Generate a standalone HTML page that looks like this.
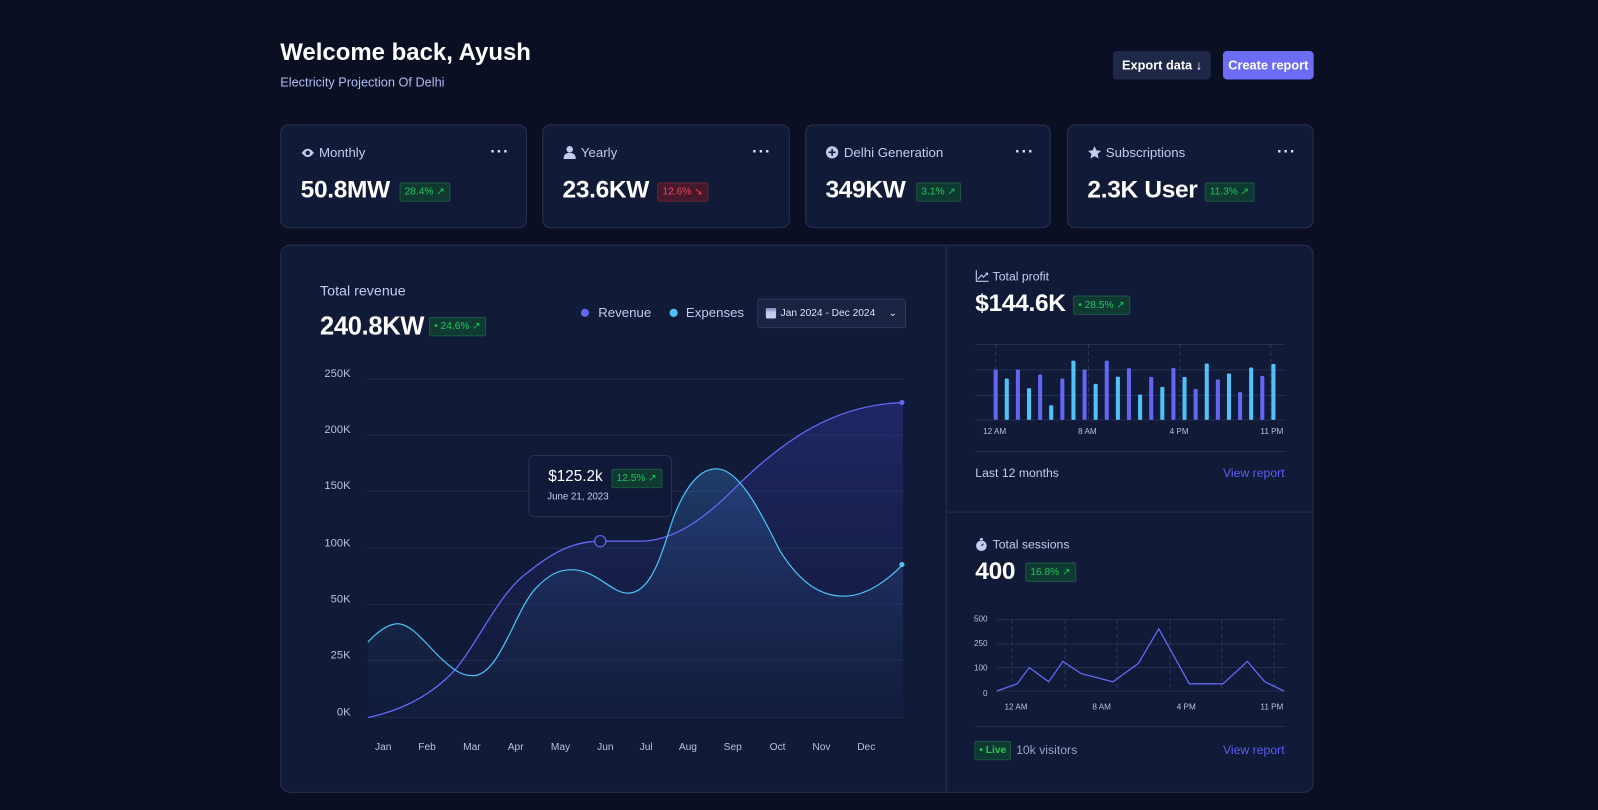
<!DOCTYPE html>
<html><head><meta charset="utf-8"><style>
*{margin:0;padding:0;box-sizing:border-box}
html,body{width:1598px;height:810px;overflow:hidden;background:#0a0f24;font-family:"Liberation Sans",sans-serif;color:#fff}
#w{position:absolute;left:0;top:0;width:1568px;height:795px;transform:scale(1.01913);transform-origin:0 0}
.a{position:absolute;white-space:nowrap}
.card{position:absolute;background:#111a37;border:1px solid #283152;border-radius:8px}
.lbl{color:#c5cbf0;font-size:13px}
.val{font-weight:bold;font-size:24px;letter-spacing:-0.3px}
.bg{position:absolute;font-size:10px;color:#22c55e;background:#0f3a31;border:1px solid #1c5545;border-radius:2px;padding:2px 4px;line-height:13px}
.red{color:#f0485a;background:#48192a;border-color:#6a2535}
.dots{color:#dfe3f8;font-size:16px;letter-spacing:1px;font-weight:bold}
.ax{fill:#b9c0e0;font-size:11px;font-family:"Liberation Sans",sans-serif}
.axs{fill:#b9c0e0;font-size:8px;font-family:"Liberation Sans",sans-serif}
</style></head><body><div id="w">
<div class="a" style="left:275px;top:38px;font-size:23.5px;font-weight:bold">Welcome back, Ayush</div>
<div class="a" style="left:275px;top:74px;font-size:12.5px;color:#b4bdf0">Electricity Projection Of Delhi</div>
<div class="a" style="left:1092px;top:50px;width:96px;height:28px;background:#1f2846;border-radius:4px;font-size:12.5px;font-weight:bold;line-height:28px;padding-left:9px">Export data <span style="font-weight:normal">↓</span></div>
<div class="a" style="left:1200px;top:50px;width:89px;height:28px;background:#6c6cf5;border-radius:4px;font-size:12.5px;font-weight:bold;line-height:28px;text-align:center">Create report</div>

<div class="card" style="left:275px;top:122px;width:242px;height:102px"></div>
<div class="card" style="left:532px;top:122px;width:243px;height:102px"></div>
<div class="card" style="left:790px;top:122px;width:241px;height:102px"></div>
<div class="card" style="left:1047px;top:122px;width:242px;height:102px"></div>

<svg class="a" style="left:295px;top:144px" width="14" height="12" viewBox="0 0 14 12"><path d="M1 6Q7-2 13 6Q7 14 1 6Z" fill="#c5cbf0"/><circle cx="7" cy="6" r="2.2" fill="#111a37"/></svg>
<div class="a lbl" style="left:313px;top:142px">Monthly</div>
<div class="a dots" style="left:481px;top:141px">···</div>
<div class="a val" style="left:295px;top:173px">50.8MW</div>
<div class="bg" style="left:392px;top:179px">28.4% ↗</div>

<svg class="a" style="left:553px;top:143px" width="12" height="13" viewBox="0 0 12 13"><circle cx="6" cy="3.5" r="3.2" fill="#c5cbf0"/><path d="M0 13Q0 7 6 7Q12 7 12 13Z" fill="#c5cbf0"/></svg>
<div class="a lbl" style="left:570px;top:142px">Yearly</div>
<div class="a dots" style="left:738px;top:141px">···</div>
<div class="a val" style="left:552px;top:173px">23.6KW</div>
<div class="bg red" style="left:645px;top:179px">12.6% ↘</div>

<svg class="a" style="left:810px;top:143px" width="13" height="13" viewBox="0 0 13 13"><circle cx="6.5" cy="6.5" r="6" fill="#c5cbf0"/><path d="M6.5 3v7M3 6.5h7" stroke="#111a37" stroke-width="1.6"/></svg>
<div class="a lbl" style="left:828px;top:142px">Delhi Generation</div>
<div class="a dots" style="left:996px;top:141px">···</div>
<div class="a val" style="left:810px;top:173px">349KW</div>
<div class="bg" style="left:899px;top:179px">3.1% ↗</div>

<svg class="a" style="left:1067px;top:143px" width="14" height="13" viewBox="0 0 14 13"><path d="M7 0.5L8.9 4.6 13.4 5 10 8 11 12.5 7 10.2 3 12.5 4 8 0.6 5 5.1 4.6Z" fill="#c5cbf0"/></svg>
<div class="a lbl" style="left:1085px;top:142px">Subscriptions</div>
<div class="a dots" style="left:1253px;top:141px">···</div>
<div class="a val" style="left:1067px;top:173px">2.3K User</div>
<div class="bg" style="left:1182px;top:179px">11.3% ↗</div>

<div class="card" style="left:275px;top:240px;width:1014px;height:538px;border-radius:10px"></div>
<div class="a" style="left:928px;top:241px;width:1px;height:536px;background:#283152"></div>
<div class="a" style="left:929px;top:502px;width:359px;height:1px;background:#283152"></div>

<div class="a" style="left:314px;top:277px;font-size:14px;color:#c5cbf0">Total revenue</div>
<div class="a val" style="left:314px;top:306px;font-size:25px">240.8KW</div>
<div class="bg" style="left:421px;top:311px">• 24.6% ↗</div>
<div class="a" style="left:570px;top:303px;width:8px;height:8px;border-radius:50%;background:#6366f1"></div>
<div class="a" style="left:587px;top:299px;font-size:13px;color:#c5cbf0">Revenue</div>
<div class="a" style="left:657px;top:303px;width:8px;height:8px;border-radius:50%;background:#4fc3f7"></div>
<div class="a" style="left:673px;top:299px;font-size:13px;color:#c5cbf0">Expenses</div>
<div class="a" style="left:743px;top:293px;width:146px;height:29px;background:#1a2342;border:1px solid #2e3858;border-radius:3px;font-size:10px;line-height:27px;padding-left:22px;color:#dfe3f8">Jan 2024 - Dec 2024<span style="position:absolute;left:128px;font-size:10px">⌄</span></div>
<svg class="a" style="left:751px;top:301px" width="11" height="12" viewBox="0 0 11 12"><rect x="0.5" y="1.5" width="10" height="10" rx="1.5" fill="#c5cbf0"/><rect x="0.5" y="1.5" width="10" height="3" fill="#9aa3d0"/></svg>

<svg class="a" style="left:0;top:0" width="1568" height="795" viewBox="0 0 1568 795">
<defs>
<linearGradient id="gr" x1="0" y1="0" x2="0" y2="1"><stop offset="0" stop-color="#2b2f86" stop-opacity=".6"/><stop offset="1" stop-color="#1a2250" stop-opacity=".15"/></linearGradient>
<linearGradient id="ge" x1="0" y1="0" x2="0" y2="1"><stop offset="0" stop-color="#2d5f9e" stop-opacity=".5"/><stop offset="1" stop-color="#1a2d55" stop-opacity=".1"/></linearGradient>
</defs>
<g stroke="#222c4a" stroke-width="1">
<path d="M360 372H887M360 427H887M360 482H887M360 538H887M360 593H887M360 648H887M360 704H887"/>
</g>
<g class="ax" text-anchor="end">
<text x="344" y="370">250K</text><text x="344" y="425">200K</text><text x="344" y="480">150K</text><text x="344" y="536">100K</text><text x="344" y="591">50K</text><text x="344" y="646">25K</text><text x="344" y="702">0K</text>
</g>
<g class="ax" text-anchor="middle" style="font-size:10px">
<text x="376" y="736">Jan</text><text x="419" y="736">Feb</text><text x="463" y="736">Mar</text><text x="506" y="736">Apr</text><text x="550" y="736">May</text><text x="594" y="736">Jun</text><text x="634" y="736">Jul</text><text x="675" y="736">Aug</text><text x="719" y="736">Sep</text><text x="763" y="736">Oct</text><text x="806" y="736">Nov</text><text x="850" y="736">Dec</text>
</g>
<path d="M361,704 C390,698 420,685 445,659 C470,630 490,580 520,560 C545,540 565,531 589,531 L628,531 C660,531 690,510 720,480 C770,430 820,397 886,395 L886,704Z" fill="url(#gr)"/>
<path d="M361,630 C375,615 385,612 390,612 C405,612 420,635 435,648 C448,660 455,663 464,663 C490,663 505,600 525,578 C540,562 550,559 561,559 C585,559 600,582 616,582 C640,582 650,540 660,510 C675,470 690,460 703,460 C725,460 745,500 765,540 C785,572 805,585 828,585 C850,585 870,570 886,554 L886,704 L361,704Z" fill="url(#ge)"/>
<path d="M361,704 C390,698 420,685 445,659 C470,630 490,580 520,560 C545,540 565,531 589,531 L628,531 C660,531 690,510 720,480 C770,430 820,397 886,395" fill="none" stroke="#6366f1" stroke-width="1.3"/>
<path d="M361,630 C375,615 385,612 390,612 C405,612 420,635 435,648 C448,660 455,663 464,663 C490,663 505,600 525,578 C540,562 550,559 561,559 C585,559 600,582 616,582 C640,582 650,540 660,510 C675,470 690,460 703,460 C725,460 745,500 765,540 C785,572 805,585 828,585 C850,585 870,570 886,554" fill="none" stroke="#4fc3f7" stroke-width="1.2"/>
<circle cx="589" cy="531" r="5.5" fill="#161d45" stroke="#6366f1" stroke-width="1.2"/>
<circle cx="885" cy="395" r="2.5" fill="#6366f1"/><circle cx="885" cy="554" r="2.5" fill="#4fc3f7"/>
<rect x="519" y="447" width="140" height="60" rx="6" fill="#111a37" fill-opacity=".85" stroke="#2a3352"/>

<g stroke="#252f4f"><path d="M957 338H1261M957 363H1261M957 388H1261M957 412H1261"/></g>
<g stroke="#2e3858" stroke-dasharray="4 3"><path d="M977 338V412M1068 338V412M1158 338V412M1247 338V412"/></g>
<g id="bars"></g>
<g class="axs" text-anchor="middle"><text x="976" y="426">12 AM</text><text x="1067" y="426">8 AM</text><text x="1157" y="426">4 PM</text><text x="1248" y="426">11 PM</text></g>
<path d="M957 443H1261" stroke="#283152"/>

<g stroke="#252f4f"><path d="M978 608H1261M978 632H1261M978 655H1261M978 678H1261"/></g>
<g stroke="#2e3858" stroke-dasharray="4 3"><path d="M993 608V678M1045 608V678M1096 608V678M1148 608V678M1199 608V678M1250 608V678"/></g>
<g class="axs" text-anchor="end"><text x="969" y="610">500</text><text x="969" y="634">250</text><text x="969" y="658">100</text><text x="969" y="683">0</text></g>
<g class="axs" text-anchor="middle"><text x="997" y="696">12 AM</text><text x="1081" y="696">8 AM</text><text x="1164" y="696">4 PM</text><text x="1248" y="696">11 PM</text></g>
<polyline points="978,678 998,671 1010,655 1029,669 1043,649 1061,661 1092,669 1117,651 1137,617 1167,671 1200,671 1224,649 1241,669 1260,678" fill="none" stroke="#6366f1" stroke-width="1.3"/>
<path d="M957 713H1261" stroke="#283152"/>
</svg>

<div class="a" style="left:538px;top:459px;font-size:15px">$125.2k</div>
<div class="bg" style="left:600px;top:460px">12.5% ↗</div>
<div class="a" style="left:537px;top:482px;font-size:9.5px;color:#c5cbf0">June 21, 2023</div>

<svg class="a" style="left:957px;top:265px" width="13" height="12" viewBox="0 0 13 12"><path d="M1 0V11H13M2.5 9L6 5 8 7 12 3M10 3H12V5" fill="none" stroke="#c5cbf0" stroke-width="1.1"/></svg>
<div class="a" style="left:974px;top:264px;font-size:12px;color:#c5cbf0">Total profit</div>
<div class="a val" style="left:957px;top:284px;font-size:24px">$144.6K</div>
<div class="bg" style="left:1053px;top:290px">• 28.5% ↗</div>
<div class="a" style="left:957px;top:457px;font-size:12px;color:#c5cbf0">Last 12 months</div>
<div class="a" style="left:1200px;top:457px;font-size:12px;color:#5b5ff0">View report</div>

<svg class="a" style="left:957px;top:528px" width="12" height="13" viewBox="0 0 12 13"><rect x="4.5" y="0" width="3" height="2" fill="#c5cbf0"/><circle cx="6" cy="7.5" r="5.2" fill="#c5cbf0"/><path d="M6 7.5L8 5.5" stroke="#111a37"/></svg>
<div class="a" style="left:974px;top:527px;font-size:12px;color:#c5cbf0">Total sessions</div>
<div class="a val" style="left:957px;top:547px;font-size:24px">400</div>
<div class="bg" style="left:1006px;top:552px">16.8% ↗</div>
<div class="bg" style="left:956px;top:727px;font-size:10px;font-weight:bold">• Live</div>
<div class="a" style="left:997px;top:729px;font-size:12px;color:#9aa3c8">10k visitors</div>
<div class="a" style="left:1200px;top:729px;font-size:12px;color:#5b5ff0">View report</div>
</div>
<script>
(function(){var h=[49.4,40.6,49.4,31.1,44.5,14.4,40.6,58.2,49.4,35.3,58.2,42.5,50.7,24.9,42.2,32.4,51,42.2,30.4,55.3,39.6,45.5,27.2,51.4,43.2,55];
var s='';for(var i=0;i<h.length;i++){var x=975+i*10.9;s+='<rect x="'+x.toFixed(1)+'" y="'+(412-h[i]).toFixed(1)+'" width="4" height="'+h[i]+'" rx="1" fill="'+(i%2?'#4fc3f7':'#6366f1')+'"/>';}
document.getElementById('bars').innerHTML=s;})();
</script>
</body></html>
